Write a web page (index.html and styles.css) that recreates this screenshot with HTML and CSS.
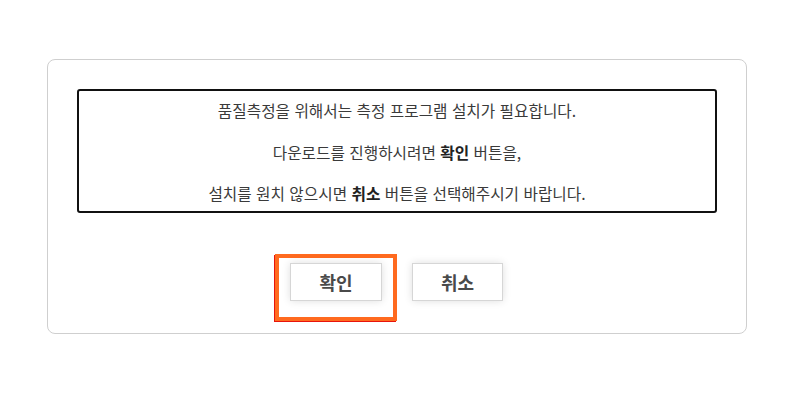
FILE: index.html
```html
<!DOCTYPE html>
<html lang="ko">
<head>
<meta charset="utf-8">
<link rel="stylesheet" href="styles.css">
</head>
<body>
<div class="card">
  <div class="notice">
    <p>품질측정을 위해서는 측정 프로그램 설치가 필요합니다.</p>
    <p>다운로드를 진행하시려면 <b>확인</b> 버튼을,</p>
    <p>설치를 원치 않으시면 <b>취소</b> 버튼을 선택해주시기 바랍니다.</p>
  </div>
  <div class="actions">
    <div class="focus-ring"><button class="btn">확인</button></div>
    <button class="btn btn-cancel">취소</button>
  </div>
</div>
</body>
</html>
```
FILE: styles.css
```css
html, body {
  margin: 0;
  padding: 0;
  background: #fff;
}
body {
  font-family: "Noto Sans CJK KR", "Noto Sans", sans-serif;
  color: #333;
  padding-top: 59px;
}
.card {
  box-sizing: border-box;
  width: 700px;
  height: 275px;
  margin: 0 auto;
  border: 1px solid #cfcfcf;
  border-radius: 8px;
  padding: 29px 29px 0;
}
.notice {
  box-sizing: border-box;
  height: 124px;
  border: 2px solid #111;
  border-radius: 3px;
  padding: 10px 0 7px;
  display: flex;
  flex-direction: column;
  gap: 21.5px;
  text-align: center;
}
.notice p {
  margin: 0;
  font-size: 15.7px;
  line-height: 20px;
  color: #3a3a3a;
}
.notice b {
  font-weight: 700;
  color: #222;
}
.actions {
  display: flex;
  justify-content: center;
  align-items: flex-start;
  gap: 15px;
  margin-top: 41px;
  padding-right: 16px;
}
.focus-ring {
  border: 4px solid #ff6a1f;
  padding: 5px 11px 16px;
  box-shadow: -1px 1px 0 #e8140c;
}
.btn {
  box-sizing: border-box;
  width: 92px;
  height: 38px;
  background: #fff;
  border: 1px solid #d6d6d6;
  box-shadow: 0 0 8px rgba(0, 0, 0, 0.13);
  font-family: "Noto Sans CJK KR", "Noto Sans", sans-serif;
  font-size: 18px;
  font-weight: 700;
  color: #4a4a4a;
  padding: 0;
  cursor: pointer;
}
.btn-cancel {
  width: 91px;
  margin-top: 9px;
}
```
